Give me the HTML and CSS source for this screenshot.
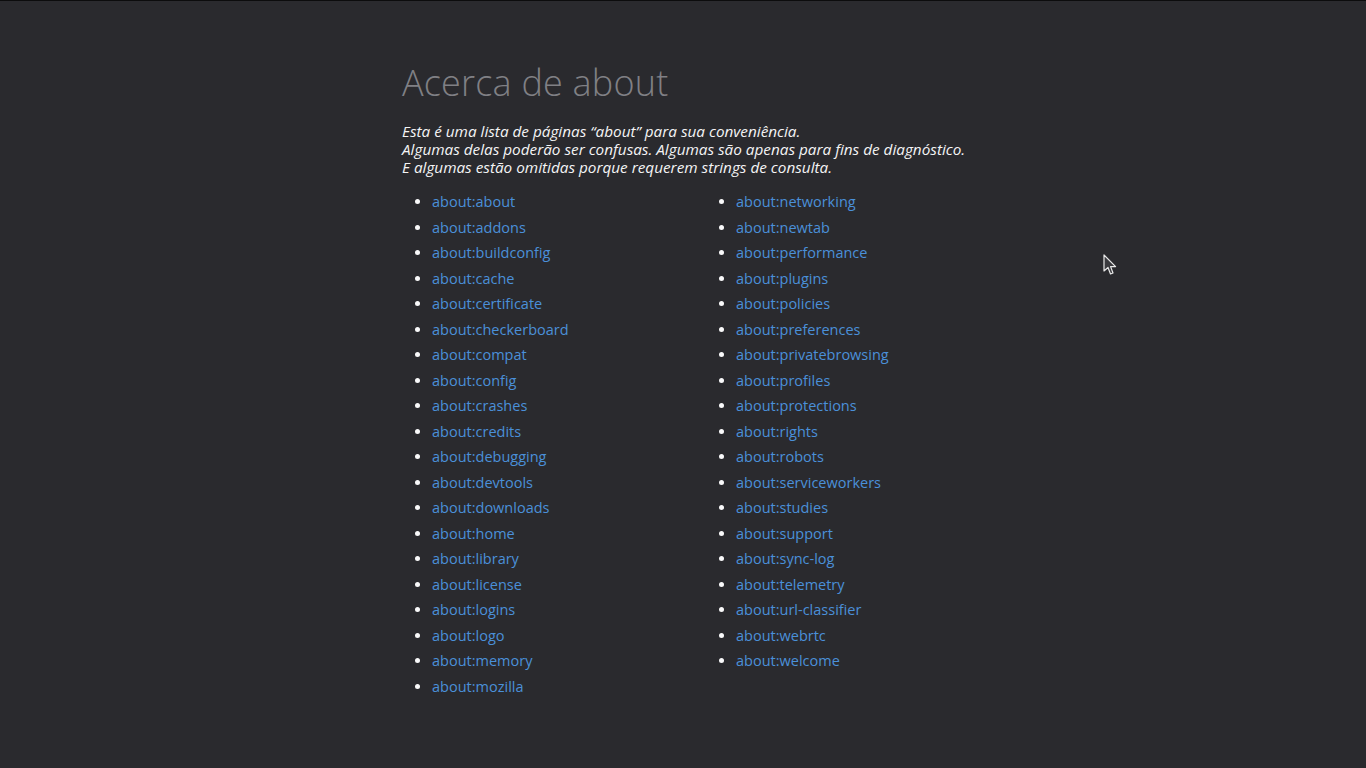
FILE: index.html
```html
<!DOCTYPE html>
<html lang="pt">
<head>
<meta charset="utf-8">
<title>Acerca de about</title>
<link rel="stylesheet" href="styles.css">
</head>
<body>
<div class="topline"></div>
<main class="page">
  <h1 class="title">Acerca de about</h1>
  <p class="intro">Esta é uma lista de páginas “about” para sua conveniência.<br>Algumas delas poderão ser confusas. Algumas são apenas para fins de diagnóstico.<br>E algumas estão omitidas porque requerem strings de consulta.</p>
  <ul class="list">
    <li><a href="#">about:about</a></li>
    <li><a href="#">about:addons</a></li>
    <li><a href="#">about:buildconfig</a></li>
    <li><a href="#">about:cache</a></li>
    <li><a href="#">about:certificate</a></li>
    <li><a href="#">about:checkerboard</a></li>
    <li><a href="#">about:compat</a></li>
    <li><a href="#">about:config</a></li>
    <li><a href="#">about:crashes</a></li>
    <li><a href="#">about:credits</a></li>
    <li><a href="#">about:debugging</a></li>
    <li><a href="#">about:devtools</a></li>
    <li><a href="#">about:downloads</a></li>
    <li><a href="#">about:home</a></li>
    <li><a href="#">about:library</a></li>
    <li><a href="#">about:license</a></li>
    <li><a href="#">about:logins</a></li>
    <li><a href="#">about:logo</a></li>
    <li><a href="#">about:memory</a></li>
    <li><a href="#">about:mozilla</a></li>
    <li><a href="#">about:networking</a></li>
    <li><a href="#">about:newtab</a></li>
    <li><a href="#">about:performance</a></li>
    <li><a href="#">about:plugins</a></li>
    <li><a href="#">about:policies</a></li>
    <li><a href="#">about:preferences</a></li>
    <li><a href="#">about:privatebrowsing</a></li>
    <li><a href="#">about:profiles</a></li>
    <li><a href="#">about:protections</a></li>
    <li><a href="#">about:rights</a></li>
    <li><a href="#">about:robots</a></li>
    <li><a href="#">about:serviceworkers</a></li>
    <li><a href="#">about:studies</a></li>
    <li><a href="#">about:support</a></li>
    <li><a href="#">about:sync-log</a></li>
    <li><a href="#">about:telemetry</a></li>
    <li><a href="#">about:url-classifier</a></li>
    <li><a href="#">about:webrtc</a></li>
    <li><a href="#">about:welcome</a></li>
  </ul>
</main>
<svg class="cursor" width="14" height="22" viewBox="0 0 14 22" aria-hidden="true">
  <path d="M1 1 L1 17 L5 13.5 L7.5 20 L10 19 L7.6 12.6 L12.6 12.6 Z" fill="#3a3a3e" stroke="#e8e8e8" stroke-width="1.2" stroke-linejoin="round"/>
</svg>
</body>
</html>
```

FILE: styles.css
```css
html, body {
  margin: 0;
  padding: 0;
  background: #2a2a2e;
  height: 100%;
}
body {
  font-family: "Open Sans", "Noto Sans", sans-serif;
  color: #f9f9fa;
  overflow: hidden;
}
.topline {
  height: 1px;
  background: #0c0c0d;
}
.page {
  width: 562px;
  margin: 0 auto;
  padding-top: 59px;
}
.title {
  margin: 0;
  font-size: 36px;
  font-weight: 300;
  line-height: 46px;
  color: #808085;
  letter-spacing: 0.2px;
}
.intro {
  margin: 16px 0 0;
  font-size: 15.3px;
  font-style: italic;
  line-height: 18px;
  color: #f4f4f5;
  white-space: nowrap;
}
.list {
  margin: 13px 0 0;
  padding: 0 0 0 30px;
  display: grid;
  grid-template-columns: 304px 304px;
  grid-template-rows: repeat(20, 25.5px);
  grid-auto-flow: column;
  list-style: disc;
  font-size: 14.5px;
  line-height: 25.5px;
}
.list li {
  color: #f9f9fa;
}
.list a {
  color: #4a90d9;
  text-decoration: none;
}
.cursor {
  position: absolute;
  left: 1103px;
  top: 254px;
}
```
